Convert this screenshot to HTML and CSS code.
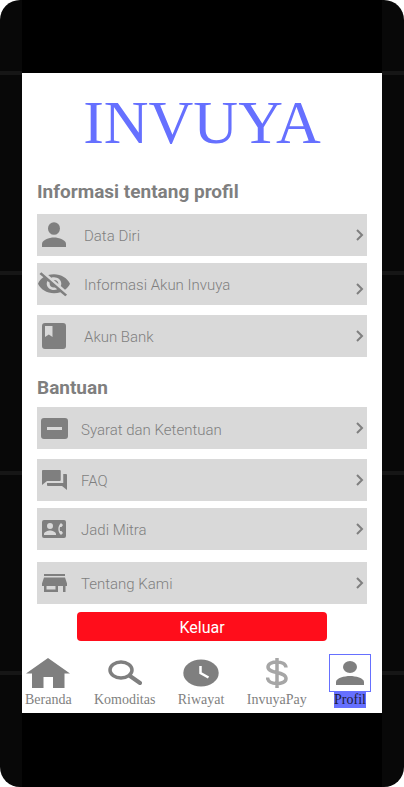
FILE: index.html
```html
<!DOCTYPE html>
<html lang="id">
<head>
<meta charset="utf-8">
<meta name="viewport" content="width=device-width, initial-scale=1">
<title>Invuya - Profil</title>
<link rel="stylesheet" href="styles.css">
</head>
<body>
<div class="phone">
  <div class="bar bar-top"></div>
  <main class="screen">
    <h1 class="logo">INVUYA</h1>

    <section class="group">
      <h2 class="heading">Informasi tentang profil</h2>
      <a class="row" href="#data">
        <span class="icon"><svg width="24" height="26" viewBox="0 0 24 26"><ellipse cx="12" cy="6.500" rx="6" ry="6.300"/><path d="M0 25v-3c0-4 7-6.500 12-6.500s12 2.500 12 6.500v3z"/></svg></span>
        <span class="label">Data Diri</span>
        <svg class="chevron" width="8" height="12" viewBox="0 0 8 12"><path d="M1 1l5 5-5 5"/></svg>
      </a>
      <a class="row row-tight row-low-chevron" href="#akun">
        <span class="icon"><svg width="32" height="26" viewBox="1 2 22 20.500" preserveAspectRatio="none"><path d="M12 7c2.760 0 5 2.240 5 5 0 .65-.13 1.260-.36 1.830l2.920 2.920c1.510-1.260 2.700-2.890 3.430-4.750-1.730-4.390-6-7.500-11-7.500-1.400 0-2.740.25-3.980.7l2.160 2.160C10.740 7.130 11.350 7 12 7zM2 4.270l2.280 2.280.46.46C3.080 8.300 1.780 10.020 1 12c1.730 4.390 6 7.500 11 7.500 1.550 0 3.030-.3 4.380-.84l.42.42L19.730 22 21 20.730 3.270 3 2 4.270zM7.530 9.800l1.550 1.550c-.05.21-.08.43-.08.65 0 1.660 1.340 3 3 3 .22 0 .44-.03.65-.08l1.550 1.550c-.67.33-1.410.53-2.200.53-2.760 0-5-2.240-5-5 0-.79.2-1.530.53-2.200zm4.310-.78l3.150 3.150.02-.16c0-1.660-1.340-3-3-3l-.17.01z"/></svg></span>
        <span class="label">Informasi Akun Invuya</span>
        <svg class="chevron" width="8" height="12" viewBox="0 0 8 12"><path d="M1 1l5 5-5 5"/></svg>
      </a>
      <a class="row" href="#bank">
        <span class="icon"><svg width="24" height="26" viewBox="0 0 24 26"><path fill-rule="evenodd" d="M3 0h18a3 3 0 0 1 3 3v20a3 3 0 0 1-3 3H3a3 3 0 0 1-3-3V3a3 3 0 0 1 3-3zM3 3v11l3.800-2.500L10.500 14V3z"/></svg></span>
        <span class="label">Akun Bank</span>
        <svg class="chevron" width="8" height="12" viewBox="0 0 8 12"><path d="M1 1l5 5-5 5"/></svg>
      </a>
    </section>

    <section class="group group-help">
      <h2 class="heading">Bantuan</h2>
      <a class="row row-low-label" href="#syarat">
        <span class="icon"><svg width="27" height="21" viewBox="0 0 27 21"><path fill-rule="evenodd" d="M3 0h21a3 3 0 0 1 3 3v15a3 3 0 0 1-3 3H3a3 3 0 0 1-3-3V3a3 3 0 0 1 3-3zM6 9v3h15V9z"/></svg></span>
        <span class="label">Syarat dan Ketentuan</span>
        <svg class="chevron" width="8" height="12" viewBox="0 0 8 12"><path d="M1 1l5 5-5 5"/></svg>
      </a>
      <a class="row" href="#faq">
        <span class="icon"><svg width="25" height="20" viewBox="2 2 20 20" preserveAspectRatio="none"><path d="M21 6h-2v9H6v2c0 .55.45 1 1 1h11l4 4V7c0-.55-.45-1-1-1zm-4 6V3c0-.55-.45-1-1-1H3c-.55 0-1 .45-1 1v14l4-4h10c.55 0 1-.45 1-1z"/></svg></span>
        <span class="label">FAQ</span>
        <svg class="chevron" width="8" height="12" viewBox="0 0 8 12"><path d="M1 1l5 5-5 5"/></svg>
      </a>
      <a class="row row-tight" href="#mitra">
        <span class="icon"><svg width="24" height="18" viewBox="0 0 24 18"><path fill-rule="evenodd" d="M2 0h20a2 2 0 0 1 2 2v14a2 2 0 0 1-2 2H2a2 2 0 0 1-2-2V2a2 2 0 0 1 2-2zM8 3a3 3 0 1 0 0 6 3 3 0 1 0 0-6zM2 15h12v-1c0-2-4-3.500-6-3.500S2 12 2 14zM18 11c-.4-1.300-.4-2.700 0-4h1.500L21 5l-2-2c-3.500 2.700-3.500 9.300 0 12l2-2-1.500-2z"/></svg></span>
        <span class="label">Jadi Mitra</span>
        <svg class="chevron" width="8" height="12" viewBox="0 0 8 12"><path d="M1 1l5 5-5 5"/></svg>
      </a>
      <a class="row row-loose" href="#tentang">
        <span class="icon"><svg width="25" height="18" viewBox="0 0 25 18"><path fill-rule="evenodd" d="M2 0h21v2H2zM2 3.500h21l2 6V12h-1.500v6H21v-6h-5v6H2v-6H0V9.500zM4.500 12v3.500h9V12z"/></svg></span>
        <span class="label">Tentang Kami</span>
        <svg class="chevron" width="8" height="12" viewBox="0 0 8 12"><path d="M1 1l5 5-5 5"/></svg>
      </a>
    </section>

    <button class="logout" type="button">Keluar</button>

    <nav class="tabs">
      <a class="tab" href="#beranda">
        <span class="tab-icon"><svg width="44" height="30" viewBox="0 0 44 30"><path d="M22 0l22 15.500h-5.500V30H27V19H17.500v11H6V15.500H0z"/></svg></span>
        <span class="tab-label">Beranda</span>
      </a>
      <a class="tab" href="#komoditas">
        <span class="tab-icon"><svg width="34" height="26" viewBox="0 0 34 26"><g fill="none" stroke="#7f7f7f"><ellipse cx="13" cy="10" rx="11" ry="8" stroke-width="3.500"/><path d="M22 16l10 7" stroke-width="4" stroke-linecap="round"/></g></svg></span>
        <span class="tab-label">Komoditas</span>
      </a>
      <a class="tab" href="#riwayat">
        <span class="tab-icon"><svg width="36" height="28" viewBox="0 0 36 28"><ellipse cx="18" cy="14" rx="17.700" ry="13.500"/><path d="M17.500 7v7l8 4.500" fill="none" stroke="#fff" stroke-width="2.500"/></svg></span>
        <span class="tab-label">Riwayat</span>
      </a>
      <a class="tab" href="#pay">
        <span class="tab-icon"><svg width="22" height="30" viewBox="0 0 22 30"><path d="M11 0v30M20 9.500C19.500 2 2 2.500 2 9c0 7 18 4 18 11.500 0 7-18.500 7-18.500-1" fill="none" stroke="#a6a6a6" stroke-width="3.500"/></svg></span>
        <span class="tab-label">InvuyaPay</span>
      </a>
      <a class="tab tab-active" href="#profil" aria-current="page">
        <span class="tab-icon"><svg width="28" height="24" viewBox="0 0 28 24"><ellipse cx="14" cy="6" rx="7" ry="6"/><path d="M0 24v-3c0-4 8.500-6 14-6s14 2 14 6v3z"/></svg></span>
        <span class="tab-label">Profil</span>
      </a>
    </nav>
  </main>
  <div class="bar bar-bottom"></div>
</div>
</body>
</html>
```

FILE: styles.css
```css
* {
  box-sizing: border-box;
}

body {
  margin: 0;
  background: #fff;
  font-family: Roboto, "Liberation Sans", sans-serif;
  color: #7f7f7f;
}

a {
  color: inherit;
  text-decoration: none;
}

svg {
  display: block;
  fill: #7f7f7f;
}

.phone {
  display: flex;
  flex-direction: column;
  min-height: 100vh;
  padding: 0 22px;
  border-radius: 20px;
  background: repeating-linear-gradient(#080808 0 71px, #161616 71px 75px, #080808 75px 200px);
}

.bar {
  background: #000;
}

.bar-top {
  height: 73px;
}

.bar-bottom {
  flex: 1;
}

.screen {
  display: flex;
  flex-direction: column;
  background: #fff;
}

.logo {
  margin: 13px 0 24px;
  font: 400 62px/72px "Liberation Serif", serif;
  text-align: center;
  color: #6670ff;
}

.group {
  display: flex;
  flex-direction: column;
  padding: 0 15px;
}

.group-help {
  margin-top: 21px;
}

.heading {
  margin: 0 0 2px;
  font-size: 19px;
  line-height: 20px;
  font-weight: 700;
}

.group-help .heading {
  margin-bottom: -1px;
}

.row {
  display: flex;
  align-items: center;
  height: 42px;
  margin-top: 10px;
  padding: 10px 3px 10px 0;
  background: #d9d9d9;
}

.row-tight {
  margin-top: 7px;
}

.row-loose {
  margin-top: 12px;
}

.icon {
  display: flex;
  justify-content: center;
  width: 34px;
}

.label {
  flex: 1;
  margin-left: 13px;
  padding-top: 2px;
  font-size: 15px;
  line-height: 18px;
  font-weight: 300;
}

.group-help .label {
  margin-left: 10px;
}

.row-low-label .label,
.row-low-chevron .chevron {
  align-self: flex-end;
}

.chevron {
  fill: none;
  stroke: #7f7f7f;
  stroke-width: 2;
}

.logout {
  width: 250px;
  height: 29px;
  margin: 8px auto 0;
  padding: 2px 0 0;
  border: 0;
  border-radius: 4px;
  background: #ff0d1b;
  color: #fff;
  font: 400 16px/20px Roboto, sans-serif;
}

.tabs {
  display: flex;
  justify-content: space-between;
  padding: 13px 11px 5px 3px;
}

.tab {
  display: flex;
  flex-direction: column;
  align-items: center;
}

.tab-icon {
  display: flex;
  align-items: center;
  justify-content: center;
  height: 38px;
}

.tab-label {
  font: 400 14px/16px "Liberation Serif", serif;
}

.tab-active .tab-icon {
  width: 42px;
  border: 1px solid #6670ff;
}

.tab-active .tab-label {
  background: #6670ff;
  color: #1c1c3c;
}
```
